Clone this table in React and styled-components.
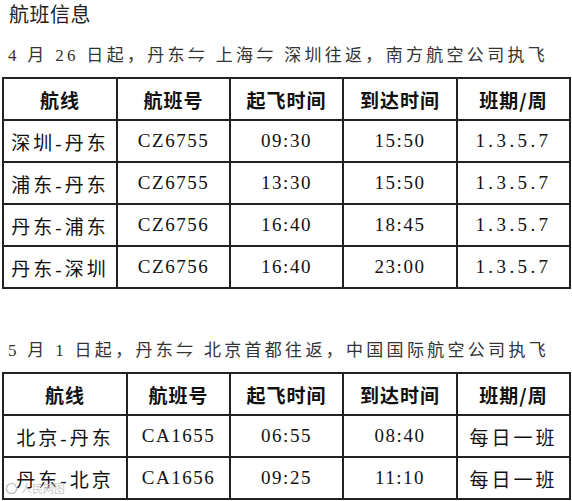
import React from 'react'
import styled, { createGlobalStyle } from 'styled-components'

const GlobalStyle = createGlobalStyle`
  body {
    margin: 0;
    background: #fff;
    font-family: "Liberation Serif", "Noto Sans CJK SC", serif;
    color: #111;
  }
`

const Page = styled.div`
  position: relative;
  width: 572px;
  height: 501px;
  overflow: hidden;
  padding: 1px 3px 0 2px;
  box-sizing: border-box;
`

const Title = styled.h2`
  margin: 0;
  padding-left: 7px;
  font: normal 20px/26px "Noto Sans CJK SC", sans-serif;
  letter-spacing: 0.5px;
  color: #222;
`

const Note = styled.p`
  margin: ${p => p.top}px 0 0;
  padding-left: 6px;
  font-size: 17px;
  line-height: 22px;
  letter-spacing: 3.3px;
  color: #333;
  white-space: nowrap;
`

const Table = styled.table`
  width: 100%;
  margin-top: ${p => p.top}px;
  border-collapse: collapse;
  table-layout: fixed;
`

const Row = styled.tr`
  height: 42px;
`

const Th = styled.th`
  padding: 0;
  border: 2px solid #222;
  font: bold 19px "Noto Sans CJK SC", sans-serif;
  letter-spacing: 1px;
  text-align: center;
  color: #111;
`

const Td = styled.td`
  padding: 0;
  border: 2px solid #222;
  font-size: 19px;
  letter-spacing: ${p => p.spacing}px;
  text-align: center;
  color: #111;
`

const Watermark = styled.div`
  position: absolute;
  left: 5px;
  bottom: 5px;
  display: flex;
  align-items: center;
  gap: 3px;
  font: 11px "Noto Sans CJK SC", sans-serif;
  color: rgba(175, 175, 175, 0.7);
  text-shadow: 0 0 1px #fff;
  pointer-events: none;
`

const headers = ['航线', '航班号', '起飞时间', '到达时间', '班期/周']

const southern = [
  ['深圳-丹东', 'CZ6755', '09:30', '15:50', '1.3.5.7'],
  ['浦东-丹东', 'CZ6755', '13:30', '15:50', '1.3.5.7'],
  ['丹东-浦东', 'CZ6756', '16:40', '18:45', '1.3.5.7'],
  ['丹东-深圳', 'CZ6756', '16:40', '23:00', '1.3.5.7'],
]

const airChina = [
  ['北京-丹东', 'CA1655', '06:55', '08:40', '每日一班'],
  ['丹东-北京', 'CA1656', '09:25', '11:10', '每日一班'],
]

const spacingFor = s => {
  if (/[\u4e00-\u9fff]/.test(s)) return 3
  if (/^\d(\.\d)+$/.test(s)) return 3.4
  return 1.5
}

function FlightTable({ top, widths, rows }) {
  return (
    <Table top={top}>
      <colgroup>
        {widths.map((w, i) => <col key={i} style={{ width: w }} />)}
      </colgroup>
      <thead>
        <Row>
          {headers.map(h => <Th key={h}>{h}</Th>)}
        </Row>
      </thead>
      <tbody>
        {rows.map(r => (
          <Row key={r[0]}>
            {r.map((c, i) => <Td key={i} spacing={spacingFor(c)}>{c}</Td>)}
          </Row>
        ))}
      </tbody>
    </Table>
  )
}

export default function App() {
  return (
    <Page>
      <GlobalStyle />
      <Title>航班信息</Title>
      <Note top={18}>4 月 26 日起，丹东⇋ 上海⇋ 深圳往返，南方航空公司执飞</Note>
      <FlightTable top={10} widths={[114, 113, 113, 114, 113]} rows={southern} />
      <Note top={51}>5 月 1 日起，丹东⇋ 北京首都往返，中国国际航空公司执飞</Note>
      <FlightTable top={10} widths={[124, 103, 113, 114, 113]} rows={airChina} />
      <Watermark>
        <svg width="13" height="13" viewBox="0 0 14 14">
          <circle cx="7" cy="7" r="5.5" fill="none" stroke="rgba(175,175,175,0.8)" strokeWidth="1.5" />
        </svg>
        人民网图
      </Watermark>
    </Page>
  )
}
